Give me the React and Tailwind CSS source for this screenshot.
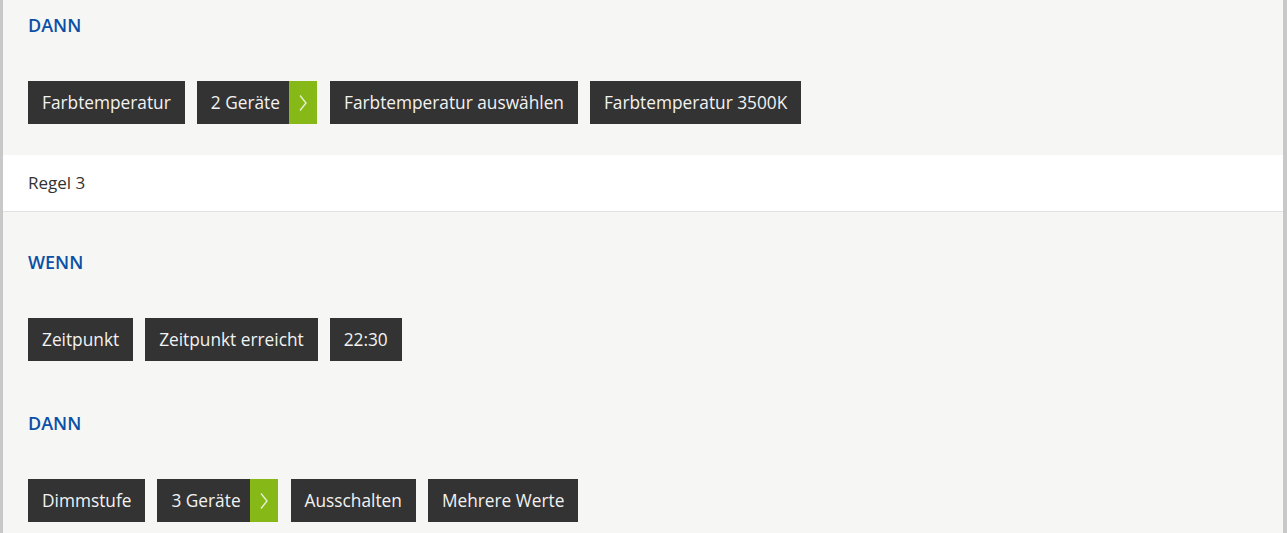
const Chip = ({ children, className = "" }) => (
  <div className={"h-[43px] flex items-center bg-[#333333] text-[#f2f2f2] px-[14px] text-[17.3px] " + className}>{children}</div>
);

const DevChip = ({ children }) => (
  <div className="h-[43px] flex items-stretch bg-[#333333] text-[#f2f2f2] text-[17.3px] mr-[1px]">
    <div className="flex items-center pl-[14px] pr-[9px]">{children}</div>
    <div className="w-[28px] bg-[#86b817] flex items-center justify-center">
      <svg width="10" height="18" viewBox="0 0 10 18" fill="none">
        <polyline points="2,1.5 8,9 2,16.5" stroke="#e6f0cf" strokeWidth="1.4" />
      </svg>
    </div>
  </div>
);

const Heading = ({ children }) => (
  <div className="text-[18px] leading-[24px] font-semibold text-[#0b50a6]">{children}</div>
);

export default function App() {
  return (
    <div className="w-[1287px] h-[533px] overflow-hidden bg-[#c8c8c8] px-[3px] pr-[4px]" style={{ fontFamily: '"Open Sans", sans-serif' }}>
      <div className="bg-[#f6f6f4] h-full">
        <div className="pt-[13px] pb-[31px] px-[25px]">
          <Heading>DANN</Heading>
          <div className="mt-[44px] flex gap-[12px]">
            <Chip>Farbtemperatur</Chip>
            <DevChip>2 Geräte</DevChip>
            <Chip>Farbtemperatur auswählen</Chip>
            <Chip>Farbtemperatur 3500K</Chip>
          </div>
        </div>
        <div className="bg-white h-[57px] border-b border-[#e2e2e0] flex items-center px-[25px] text-[17px] text-[#333333]">
          Regel 3
        </div>
        <div className="pt-[38px] px-[25px]">
          <Heading>WENN</Heading>
          <div className="mt-[44px] flex gap-[12px]">
            <Chip>Zeitpunkt</Chip>
            <Chip>Zeitpunkt erreicht</Chip>
            <Chip>22:30</Chip>
          </div>
          <div className="mt-[50px]">
            <Heading>DANN</Heading>
          </div>
          <div className="mt-[44px] flex gap-[12px]">
            <Chip>Dimmstufe</Chip>
            <DevChip>3 Geräte</DevChip>
            <Chip>Ausschalten</Chip>
            <Chip>Mehrere Werte</Chip>
          </div>
        </div>
      </div>
    </div>
  );
}
